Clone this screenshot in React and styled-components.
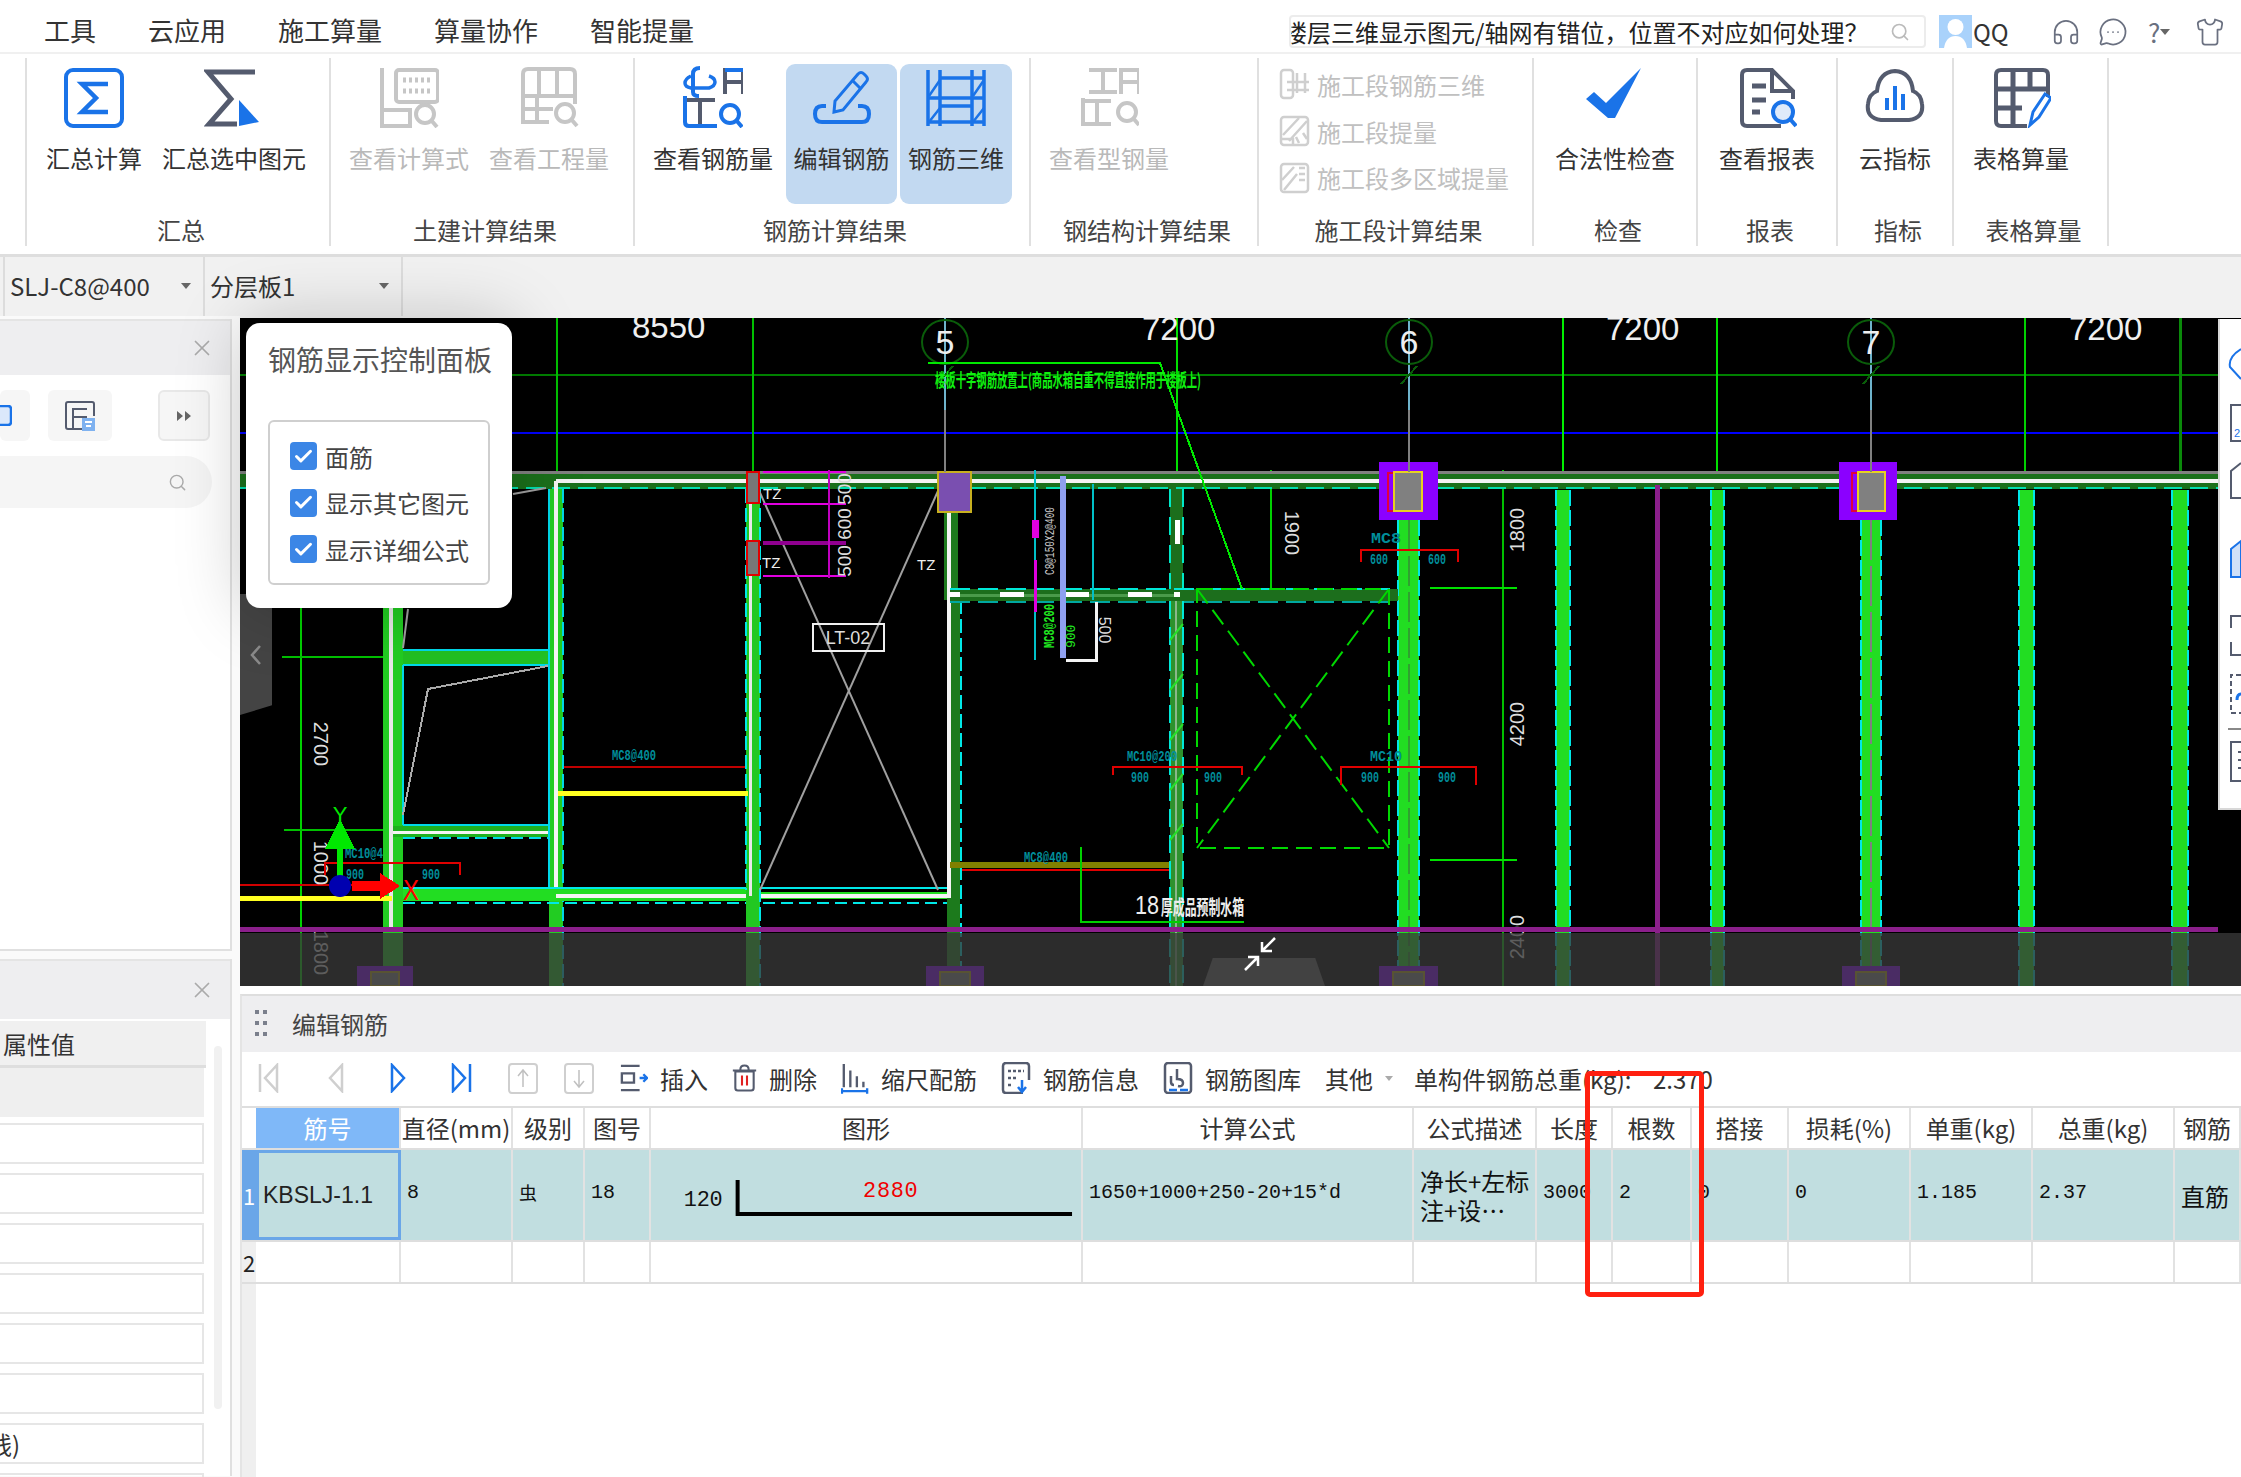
import React from "react";
import styled, { createGlobalStyle } from "styled-components";
import { Check, Headphones, MessageCircleMore, Search, Shirt, X } from "lucide-react";

const BLUE = "#1a73e8";
const DARK = "#545b6e";
const OFF = "#c6c6c6";
const CJK = `"Noto Sans CJK SC", "Liberation Sans", sans-serif`;
const MONO = `"Liberation Mono", "Noto Sans CJK SC", monospace`;

const GlobalStyle = createGlobalStyle`
  html, body { margin: 0; padding: 0; background: #fff; }
  body { font-family: ${CJK}; color: #333; }
  * { box-sizing: border-box; }
`;

const Page = styled.div`
  position: relative;
  width: 2241px;
  height: 1477px;
  overflow: hidden;
  background: #fff;
`;

/* top menu */
const MenuBar = styled.div`
  display: flex;
  align-items: center;
  height: 54px;
  padding: 8px 0 0 44px;
  gap: 52px;
  border-bottom: 2px solid #f0f0f0;
  font-size: 26px;
  color: #333;
`;
const MenuItem = styled.span`
  line-height: 36px;
`;
const MenuRight = styled.div`
  display: flex;
  align-items: center;
  margin-left: auto;
  margin-top: 3px;
  height: 36px;
`;
const SearchBox = styled.div`
  display: flex;
  align-items: center;
  width: 637px;
  height: 33px;
  margin-right: 13px;
  border: 2px solid #ececec;
  border-radius: 4px;
  overflow: hidden;
  font-size: 24px;
  white-space: nowrap;
  color: #222;
`;
const SearchText = styled.span`
  margin-left: -8px;
  flex: 1;
`;
const SearchGlyph = styled.span`
  display: flex;
  margin-right: 14px;
  color: #bbb;
`;
const QQ = styled.span`
  font-size: 24px;
  margin-left: 1px;
  color: #333;
  width: 78px;
`;
const TopIcon = styled.span`
  display: flex;
  width: ${(p) => p.$w}px;
  color: #6a7080;
  font-size: 26px;
  align-items: center;
`;

/* ribbon */
const Ribbon = styled.div`
  display: flex;
  height: 203px;
  padding: 4px 0 0 25px;
  border-bottom: 3px solid #dedede;
`;
const Group = styled.div`
  display: flex;
  flex-direction: column;
  width: ${(p) => p.$w}px;
  height: 188px;
  padding-top: 6px;
  border-left: 2px solid #e0e0e0;
  ${(p) => p.$last && "border-right: 2px solid #e0e0e0;"}
`;
const ButtonRow = styled.div`
  display: flex;
  height: 140px;
  justify-content: ${(p) => (p.$pad === undefined ? "center" : "flex-start")};
  margin-left: ${(p) => p.$pad || 0}px;
  gap: ${(p) => p.$gap || 0}px;
`;
const RibbonButton = styled.div`
  display: flex;
  flex-direction: column;
  align-items: center;
  flex-shrink: 0;
  width: ${(p) => p.$w || 140}px;
  height: 140px;
  padding-top: 2px;
  border-radius: 9px;
  background: ${(p) => (p.$active ? "#c2d9f1" : "transparent")};
  svg {
    display: block;
  }
`;
const ButtonLabel = styled.span`
  margin-top: 14px;
  font-size: 24px;
  line-height: 32px;
  white-space: nowrap;
  color: ${(p) => (p.$off ? "#b9b9b9" : "#333")};
`;
const GroupLabel = styled.div`
  margin-top: 10px;
  padding-left: 6px;
  text-align: center;
  font-size: 24px;
  line-height: 32px;
  white-space: nowrap;
  color: #444;
`;
const SmallList = styled.div`
  display: flex;
  flex-direction: column;
  height: 140px;
  margin-top: -3px;
  margin-bottom: 3px;
  padding-left: 20px;
`;
const SmallItem = styled.div`
  display: flex;
  align-items: center;
  gap: 7px;
  height: 48px;
  font-size: 24px;
  white-space: nowrap;
  color: #c0c0c0;
`;

/* combos under the ribbon */
const SubBar = styled.div`
  display: flex;
  height: 59px;
  padding-left: 3px;
  background: #f1f1f1;
`;
const Combo = styled.div`
  display: flex;
  align-items: center;
  justify-content: space-between;
  width: 200px;
  padding: 0 12px 2px 5px;
  border-left: 2px solid #dcdcdc;
  ${(p) => p.$end && "border-right: 2px solid #dcdcdc;"}
  font-size: 24px;
  color: #333;
`;
const Caret = styled.span`
  width: 0;
  height: 0;
  border-left: 5px solid transparent;
  border-right: 5px solid transparent;
  border-top: 6px solid #666;
`;

const Workspace = styled.div`
  display: flex;
  height: 1161px;
  background: #fafafa;
`;

/* left column */
const LeftColumn = styled.div`
  display: flex;
  flex-direction: column;
  width: 232px;
  flex-shrink: 0;
  padding-top: 3px;
`;
const SidePanel = styled.div`
  position: relative;
  flex-shrink: 0;
  height: ${(p) => p.$h}px;
  background: #fff;
  border-right: 2px solid #e0e0e0;
  ${(p) => p.$bottom && "border-bottom: 2px solid #e0e0e0;"}
  margin-bottom: ${(p) => (p.$bottom ? 8 : 0)}px;
`;
const SideHeader = styled.div`
  display: flex;
  align-items: center;
  justify-content: flex-end;
  height: ${(p) => p.$h}px;
  padding-right: 15px;
  background: #eeeef0;
  border-top: 2px solid #e4e4e4;
  color: #aaa;
`;
const SideTools = styled.div`
  display: flex;
  height: 51px;
  margin-top: 15px;
`;
const SideTool = styled.div`
  display: flex;
  align-items: center;
  justify-content: ${(p) => p.$justify || "center"};
  width: ${(p) => p.$w}px;
  margin-left: ${(p) => p.$ml || 0}px;
  background: #f6f6f6;
  border-radius: 6px;
  ${(p) => p.$line && "border: 2px solid #e8e8e8;"}
`;
const SidePill = styled.div`
  display: flex;
  align-items: center;
  justify-content: flex-end;
  width: 212px;
  height: 52px;
  margin-top: 15px;
  padding-right: 25px;
  border-radius: 0 26px 26px 0;
  background: #f5f5f5;
  color: #aaa;
`;
const PropHead = styled.div`
  display: flex;
  align-items: center;
  width: 206px;
  height: 47px;
  padding-left: 3px;
  margin-top: 2px;
  background: #f0f0f0;
  border-bottom: 3px solid #dedede;
  font-size: 24px;
  color: #333;
`;
const PropBlank = styled.div`
  width: 204px;
  height: 49px;
  background: #efefef;
`;
const PropRow = styled.div`
  display: flex;
  align-items: center;
  width: 204px;
  height: 41px;
  margin-top: ${(p) => p.$mt}px;
  border: 2px solid #e6e6e6;
  border-left: 0;
  overflow: hidden;
  font-size: 24px;
  white-space: nowrap;
  color: #333;
`;
const ClippedText = styled.span`
  margin-left: -12px;
`;
const ScrollThumb = styled.div`
  position: absolute;
  left: 214px;
  top: 87px;
  width: 8px;
  height: 363px;
  border-radius: 4px;
  background: #f1f1f1;
`;

/* main column */
const Main = styled.div`
  display: flex;
  flex-direction: column;
  flex: 1;
  margin-left: 8px;
  padding-top: 2px;
  background: linear-gradient(#f1f1f1 2px, #fff 2px);
`;
const Canvas = styled.div`
  position: relative;
  height: 668px;
  background: #000;
  svg {
    display: block;
  }
`;
const DarkBar = styled.div`
  position: absolute;
  left: 0;
  right: 0;
  bottom: 0;
  height: 53px;
  background: rgba(56, 56, 56, 0.78);
`;
const FoldTab = styled.div`
  position: absolute;
  left: 963px;
  bottom: 0;
  width: 122px;
  height: 28px;
  background: #424242;
  clip-path: polygon(8% 0, 92% 0, 100% 100%, 0 100%);
`;
const FoldIcon = styled.svg`
  position: absolute;
  left: 1002px;
  top: 618px;
`;
const SideTab = styled.div`
  position: absolute;
  left: 0;
  top: 276px;
  display: flex;
  align-items: center;
  justify-content: center;
  width: 32px;
  height: 121px;
  background: #444;
  clip-path: polygon(0 0, 100% 0, 100% 92%, 0 100%);
  color: #888;
`;
const RightRail = styled.div`
  position: absolute;
  right: 0;
  top: 1px;
  width: 23px;
  height: 491px;
  background: #fff;
  border-left: 2px solid #d8d8d8;
  border-bottom: 2px solid #d8d8d8;
  overflow: hidden;
`;

const Popup = styled.div`
  position: absolute;
  left: 6px;
  top: 5px;
  width: 266px;
  height: 285px;
  padding: 20px 22px 0 22px;
  border-radius: 14px;
  background: #fff;
  box-shadow: 0 0 70px rgba(0, 0, 0, 0.22);
`;
const PopupTitle = styled.div`
  font-size: 28px;
  line-height: 32px;
  white-space: nowrap;
  color: #555;
`;
const PopupBox = styled.div`
  display: flex;
  flex-direction: column;
  gap: 18.5px;
  width: 222px;
  height: 165px;
  margin-top: 45px;
  padding: 20px 0 0 20px;
  border: 2px solid #cfcfcf;
  border-radius: 6px;
`;
const CheckRow = styled.div`
  display: flex;
  align-items: center;
  gap: 8px;
  height: 28px;
  font-size: 24px;
  white-space: nowrap;
  color: #444;
`;
const CheckBox = styled.span`
  display: flex;
  align-items: center;
  justify-content: center;
  width: 27px;
  height: 28px;
  border-radius: 4px;
  background: #3b86e6;
  color: #fff;
`;

/* edit panel */
const EditPanel = styled.div`
  display: flex;
  flex-direction: column;
  flex: 1;
  margin-top: 8px;
  border-top: 2px solid #dedede;
  border-left: 2px solid #e4e4e4;
  background: #fff;
`;
const EditHeader = styled.div`
  display: flex;
  align-items: center;
  gap: 25px;
  height: 56px;
  padding: 0 0 2px 13px;
  background: #eeeef0;
  font-size: 24px;
  color: #444;
`;
const DragDots = styled.div`
  display: grid;
  grid-template-columns: 4px 4px;
  grid-auto-rows: 4px;
  gap: 7px 4px;
  span {
    background: #7a7f8c;
  }
`;
const Toolbar = styled.div`
  display: flex;
  align-items: center;
  height: 56px;
  padding: 0 0 2px 16px;
  border-bottom: 2px solid #dedede;
  font-size: 24px;
  white-space: nowrap;
  color: #333;
`;
const NavSlot = styled.div`
  display: flex;
  width: ${(p) => p.$w}px;
`;
const ToolItem = styled.div`
  display: flex;
  align-items: center;
  gap: 12px;
  margin-right: 24px;
`;
const TotalText = styled.span`
  margin-left: 21px;
  white-space: pre;
`;
const SmallCaret = styled(Caret)`
  margin-left: -12px;
  border-top-color: #aaa;
  border-left-width: 4px;
  border-right-width: 4px;
  border-top-width: 5px;
`;
const GridRow = styled.div`
  display: grid;
  grid-template-columns: 14px 145px 112px 72px 66px 432px 331px 123px 76px 79px 97px 122px 122px 142px 1fr;
  height: ${(p) => p.$h}px;
  flex-shrink: 0;
  background: ${(p) => p.$bg || "#fff"};
  border-bottom: 2px solid #dedede;
`;
const HeadCell = styled.div`
  display: flex;
  align-items: center;
  justify-content: center;
  padding-bottom: 2px;
  overflow: hidden;
  white-space: nowrap;
  border-right: 2px solid #e2e2e2;
  font-size: 24px;
  color: ${(p) => (p.$on ? "#fff" : "#333")};
  background: ${(p) => (p.$on ? "#7fb8f8" : "transparent")};
`;
const BodyCell = styled.div`
  display: flex;
  align-items: center;
  padding: 0 0 6px 6px;
  overflow: hidden;
  white-space: nowrap;
  border-right: 2px solid #e2e2e2;
  font-family: ${MONO};
  font-size: 20px;
  color: #111;
`;
const NameCell = styled.div`
  display: flex;
  align-items: center;
  padding-left: 4px;
  border: 3px solid #6aa6e8;
  font-family: "Liberation Sans", sans-serif;
  font-size: 23px;
  color: #222;
`;
const TextCell = styled(BodyCell)`
  font-family: ${CJK};
  font-size: ${(p) => p.$size || 24}px;
  line-height: 29px;
  padding-bottom: ${(p) => p.$drop || 0}px;
  color: #111;
`;
const RowHead = styled.div`
  display: flex;
  align-items: center;
  justify-content: center;
  font-size: 22px;
  background: ${(p) => (p.$on ? "#6aa6e8" : "#efefef")};
  color: ${(p) => (p.$on ? "#fff" : "#222")};
`;
const FillerRow = styled.div`
  flex: 1;
  width: 14px;
  background: #efefef;
`;
const RedMark = styled.div`
  position: absolute;
  left: 1585px;
  top: 1071px;
  width: 119px;
  height: 226px;
  border: 5px solid #ff2010;
  border-radius: 5px;
`;

/* ribbon icons */
const Ico = ({ children, w = 60, h = 62, vb = "0 0 60 62" }) => (
  <svg width={w} height={h} viewBox={vb} fill="none" strokeWidth="4">
    {children}
  </svg>
);

const SumIcon = () => (
  <Ico>
    <rect x="2" y="4" width="56" height="56" rx="7" stroke={BLUE} />
    <path d="M44 18H18l14 14-14 14h26" stroke={BLUE} strokeWidth="4.5" />
  </Ico>
);
const SumPickIcon = () => (
  <Ico>
    <path d="M51 6H4l23 27L5 58h28" stroke={DARK} strokeWidth="5" />
    <path d="M35 34l20 22-20 4z" fill={BLUE} />
  </Ico>
);
const FormulaIcon = () => (
  <Ico>
    <path d="M3 2v58h28V44H3" stroke={OFF} />
    <rect x="17" y="4" width="42" height="32" rx="3" stroke={OFF} />
    <path d="M24 14h28M24 25h28" stroke={OFF} strokeDasharray="3 3" strokeWidth="5" />
    <circle cx="46" cy="48" r="9" stroke={OFF} />
    <path d="M52 54l6 7" stroke={OFF} />
  </Ico>
);
const QtyIcon = () => (
  <Ico>
    <path d="M4 30V8q0-5 5-5h42q5 0 5 5v30M4 30h52M20 3v27M38 3v27M4 30v26h26M4 43h30M18 30v26" stroke={OFF} />
    <circle cx="46" cy="47" r="9" stroke={OFF} />
    <path d="M52 53l6 7" stroke={OFF} />
  </Ico>
);
const RebarQtyIcon = () => (
  <Ico>
    <path d="M17 2q-7 0-7 6v18q0 4 6 4" stroke={BLUE} />
    <path d="M8 10q-6 3-6 7t6 5h18q6-2 6-6t-6-6" stroke={BLUE} strokeWidth="3.5" />
    <path d="M42 28V4h18v24M42 16h18" stroke={DARK} />
    <path d="M42 4h18" stroke={BLUE} />
    <path d="M2 30v26q0 4 4 4h28" stroke={BLUE} />
    <path d="M4 34h28M17 34v24" stroke={DARK} />
    <circle cx="47" cy="48" r="9" stroke={BLUE} />
    <path d="M53 54l6 7" stroke={BLUE} />
  </Ico>
);
const EditRebarIcon = () => (
  <Ico>
    <path d="M14 40h-4q-7 0-7 8t7 8h40q7 0 7-8t-7-8h-4" stroke={BLUE} />
    <path d="M22 46l1-11 23-27q3-3 6 0l2 2q3 3 0 6L31 44z" stroke={BLUE} strokeWidth="3" />
    <path d="M40 14l8 8" stroke={BLUE} strokeWidth="3" />
  </Ico>
);
const Rebar3dIcon = () => (
  <Ico>
    <path d="M2 4v56M14 4v56M46 4v56M58 4v56M14 12h44M2 32h56M14 40h32M2 56h56" stroke={BLUE} strokeWidth="3.5" />
    <path d="M14 14L3 30M58 14L47 30M14 42L3 56M58 42L47 56" stroke={BLUE} strokeWidth="2.5" />
  </Ico>
);
const SteelIcon = () => (
  <Ico>
    <path d="M10 4h28M24 4v22M10 26h28" stroke={OFF} />
    <path d="M42 28V4h18v24M42 16h18" stroke={OFF} />
    <path d="M4 32v26h28M6 35h26M18 35v22" stroke={OFF} />
    <circle cx="48" cy="46" r="9" stroke={OFF} />
    <path d="M54 52l6 7" stroke={OFF} />
  </Ico>
);
const CheckMark = () => (
  <Ico>
    <path d="M1 33l8-7 12 11L56 2 30 52h-7z" fill={BLUE} />
  </Ico>
);
const ReportIcon = () => (
  <Ico>
    <path d="M44 60H10q-5 0-5-5V9q0-5 5-5h25l21 21v8" stroke={DARK} />
    <path d="M35 4v21h21" stroke={DARK} />
    <path d="M15 20h14M15 34h14M15 46h8" stroke={DARK} strokeWidth="5" />
    <circle cx="46" cy="46" r="10" stroke={BLUE} fill="#dfeafa" />
    <path d="M53 53l6 7" stroke={BLUE} />
  </Ico>
);
const CloudIcon = () => (
  <Ico>
    <path d="M16 54Q1 52 3 38q1-10 9-13Q14 6 30 5q16 1 18 20 8 3 9 13 2 14-13 16z" stroke={DARK} />
    <path d="M22 44V32M30 44V20M38 44V28" stroke={BLUE} />
  </Ico>
);
const TableIcon = () => (
  <Ico>
    <path d="M36 60H10q-5 0-5-5V9q0-5 5-5h42q5 0 5 5v22" stroke={DARK} />
    <path d="M5 23h52M5 42h26M22 4v56M39 4v19" stroke={DARK} strokeWidth="5" />
    <path d="M39 59l3-13 12-18 6 4-12 19z" stroke={BLUE} strokeWidth="3" />
  </Ico>
);

const MiniIcon = ({ kind }) => (
  <svg width="31" height="32" viewBox="0 0 31 32" fill="none" stroke="#cfcfcf" strokeWidth="2.5">
    <rect x="2" y="2" width={kind === "a" ? 12 : 27} height="28" rx="3" />
    {kind === "a" && <path d="M8 14h22M18 5v20M26 5v20M8 22h22" />}
    {kind === "b" && <path d="M4 20L20 3M10 26L28 6M2 24h12v6M17 22l3 6M24 18l4 6" />}
    {kind === "c" && <path d="M3 18L15 5M5 28L18 12M20 6h6M20 12h6M20 18h6" />}
  </svg>
);

const ribbonGroups = [
  { w: 304, title: "汇总", pad: -3, items: [{ label: "汇总计算", icon: <SumIcon /> }, { label: "汇总选中图元", icon: <SumPickIcon /> }] },
  { w: 304, title: "土建计算结果", pad: 8, items: [{ label: "查看计算式", icon: <FormulaIcon />, off: true }, { label: "查看工程量", icon: <QtyIcon />, off: true }] },
  {
    w: 396, title: "钢筋计算结果", pad: 8, gap: 3,
    items: [
      { label: "查看钢筋量", icon: <RebarQtyIcon /> },
      { label: "编辑钢筋", icon: <EditRebarIcon />, active: true, bw: 111 },
      { label: "钢筋三维", icon: <Rebar3dIcon />, active: true, bw: 112 },
    ],
  },
  { w: 228, title: "钢结构计算结果", pad: 8, items: [{ label: "查看型钢量", icon: <SteelIcon />, off: true }] },
  { w: 275, title: "施工段计算结果", small: [["a", "施工段钢筋三维"], ["b", "施工段提量"], ["c", "施工段多区域提量"]] },
  { w: 164, title: "检查", items: [{ label: "合法性检查", icon: <CheckMark /> }] },
  { w: 140, title: "报表", items: [{ label: "查看报表", icon: <ReportIcon /> }] },
  { w: 116, title: "指标", items: [{ label: "云指标", icon: <CloudIcon />, bw: 100 }] },
  { w: 157, title: "表格算量", last: true, pad: -3, items: [{ label: "表格算量", icon: <TableIcon /> }] },
];

/* drawing data, in page coordinates */
const thinLines = [
  [240, 375, 2218, 375, "#008000", 2],
  [240, 433, 2218, 433, "#0000ff", 2],
  [301, 600, 301, 986, "#00d000", 2],
  [557, 318, 557, 472, "#00c000", 2],
  [753, 318, 753, 472, "#00c000", 2],
  [1177, 318, 1177, 472, "#00e000", 2],
  [1563, 318, 1563, 472, "#00f000", 2],
  [1717, 318, 1717, 472, "#00e000", 2],
  [2025, 318, 2025, 472, "#00d000", 2],
  [2180, 318, 2180, 472, "#0a8a0a", 3],
  [1503, 470, 1503, 986, "#00c000", 1.5],
  [1271, 470, 1271, 600, "#00d000", 2],
  [282, 657, 383, 657, "#00c000", 2],
  [284, 830, 383, 830, "#00c000", 2],
  [1430, 588, 1517, 588, "#00e000", 2],
  [1430, 860, 1517, 860, "#00e000", 2],
  [1255, 594, 1298, 594, "#00e000", 2],
  [563, 767, 746, 767, "#c00000", 2],
  [240, 885, 390, 885, "#d00000", 2],
  [950, 870, 1175, 870, "#e00000", 2],
];
const greyLines = [
  [938, 491, 760, 890],
  [757, 486, 938, 890],
  [546, 488, 513, 494],
  [403, 648, 408, 609],
];
const vertWalls = [
  [1398, 1419, 520],
  [1556, 1570, 490],
  [1711, 1724, 490],
  [1861, 1881, 520],
  [2019, 2034, 490],
  [2172, 2188, 490],
];
const redBrackets = [
  [1113, 1242, 767, 775],
  [1341, 1476, 767, 785],
  [1361, 1458, 550, 562],
  [325, 460, 863, 875],
];
const tealLabels = [
  [612, 760, "MC8@400", 44],
  [1127, 761, "MC10@200", 50],
  [1370, 761, "MC10", 32],
  [1371, 543, "MC8", 30],
  [1024, 862, "MC8@400", 44],
  [345, 858, "MC10@4", 38],
  [1131, 782, "900", 18],
  [1204, 782, "900", 18],
  [1361, 782, "900", 18],
  [1438, 782, "900", 18],
  [1370, 564, "600", 18],
  [1428, 564, "600", 18],
  [346, 879, "900", 18],
  [422, 879, "900", 18],
];
const dimTexts = [
  [632, 338, "8550", 33],
  [1142, 340, "7200", 33],
  [1606, 340, "7200", 33],
  [2069, 340, "7200", 33],
];
const turnedTexts = [
  [319, 744, "2700", 90, 20, "#ddd"],
  [319, 863, "1000", 90, 20, "#ddd"],
  [319, 953, "1800", 90, 20, "#ddd"],
  [846, 489, "500", -90, 19, "#ddd"],
  [846, 524, "600", -90, 19, "#ddd"],
  [846, 561, "500", -90, 19, "#ddd"],
  [1290, 533, "1900", 90, 20, "#ddd"],
  [1519, 530, "1800", -90, 20, "#ddd"],
  [1519, 724, "4200", -90, 20, "#ddd"],
  [1519, 937, "2400", -90, 20, "#ddd"],
  [1103, 630, "500", 90, 16, "#ddd"],
];
const axisMarks = [
  [945, "5"],
  [1409, "6"],
  [1871, "7"],
];
const bigColumns = [
  [1379, 59, 1394, 28],
  [1839, 58, 1858, 27],
];

const Ln = ({ d }) => <line x1={d[0]} y1={d[1]} x2={d[2]} y2={d[3]} stroke={d[4]} strokeWidth={d[5]} strokeDasharray={d[6]} />;

function CadDrawing() {
  return (
    <svg width="2001" height="668" viewBox="240 318 2001 668" shapeRendering="crispEdges" fontFamily={`"Liberation Sans", sans-serif`}>
      {thinLines.map((d, i) => <Ln key={i} d={d} />)}

      {/* top beam */}
      <rect x="240" y="472" width="1978" height="17" fill="#1b701b" />
      <line x1="240" y1="472" x2="2218" y2="472" stroke="#808080" strokeWidth="3" />
      <line x1="240" y1="488" x2="2218" y2="488" stroke="#00e0b0" strokeWidth="2" strokeDasharray="18 8" />
      <line x1="556" y1="481" x2="2218" y2="481" stroke="#f4f4f4" strokeWidth="4" />

      {/* walls */}
      {vertWalls.map(([a, b, top]) => (
        <g key={a}>
          <rect x={a} y={top} width={b - a} height={986 - top} fill="#22dd22" />
          <line x1={a} y1={top} x2={a} y2="986" stroke="#00e8e8" strokeWidth="2" strokeDasharray="16 4" />
          <line x1={b} y1={top} x2={b} y2="986" stroke="#00e8e8" strokeWidth="2" strokeDasharray="16 4" />
        </g>
      ))}
      <line x1="1409" y1="520" x2="1409" y2="986" stroke="#30a030" strokeWidth="2" strokeDasharray="30 6" />
      <line x1="1871" y1="520" x2="1871" y2="986" stroke="#808080" strokeWidth="2" strokeDasharray="40 6" />
      <line x1="1657" y1="485" x2="1657" y2="986" stroke="#8b1f8b" strokeWidth="5" />

      {/* rooms on the left */}
      <rect x="383" y="600" width="20" height="386" fill="#22cc22" />
      <line x1="391" y1="600" x2="391" y2="930" stroke="#e8e8e8" strokeWidth="4" />
      <rect x="403" y="650" width="146" height="15" fill="#22c022" />
      <line x1="403" y1="650" x2="549" y2="650" stroke="#00d8e8" strokeWidth="2" />
      <line x1="403" y1="665" x2="549" y2="665" stroke="#00d8e8" strokeWidth="2" />
      <line x1="403" y1="825" x2="549" y2="825" stroke="#00d8e8" strokeWidth="2" />
      <rect x="393" y="826" width="163" height="11" fill="#1fb01f" />
      <line x1="393" y1="832" x2="556" y2="832" stroke="#f4f4f4" strokeWidth="3" />
      <line x1="403" y1="838" x2="549" y2="838" stroke="#00d8e8" strokeWidth="2" strokeDasharray="12 6" />
      <line x1="403" y1="665" x2="403" y2="825" stroke="#00d8e8" strokeWidth="2" />
      <rect x="549" y="489" width="14" height="497" fill="#22cc22" />
      <line x1="549" y1="489" x2="549" y2="895" stroke="#00d8e8" strokeWidth="2" />
      <line x1="563" y1="489" x2="563" y2="986" stroke="#00d8e8" strokeWidth="2" strokeDasharray="14 5" />
      <line x1="556" y1="481" x2="556" y2="897" stroke="#f4f4f4" strokeWidth="4" />
      <rect x="403" y="889" width="345" height="12" fill="#22dd22" />
      <line x1="403" y1="888" x2="948" y2="888" stroke="#00e8e8" strokeWidth="2" />
      <line x1="403" y1="903" x2="948" y2="903" stroke="#00e8e8" strokeWidth="2" strokeDasharray="12 6" />
      <rect x="748" y="892" width="200" height="7" fill="#22dd22" />
      <line x1="556" y1="896" x2="948" y2="896" stroke="#f4f4f4" strokeWidth="4" />
      <rect x="746" y="489" width="14" height="497" fill="#22c822" />
      <line x1="760" y1="489" x2="760" y2="986" stroke="#00e8e8" strokeWidth="2" strokeDasharray="14 5" />
      <line x1="746" y1="489" x2="746" y2="890" stroke="#00e8e8" strokeWidth="2" strokeDasharray="14 5" />
      <line x1="750" y1="481" x2="750" y2="896" stroke="#e8e8e8" strokeWidth="3" />
      <line x1="558" y1="793" x2="748" y2="793" stroke="#ffff20" strokeWidth="5" />
      <line x1="240" y1="898" x2="392" y2="898" stroke="#ffff20" strokeWidth="5" />
      <polyline points="548,666 428,689 403,815" fill="none" stroke="#aaa" strokeWidth="2" />
      {greyLines.map((d, i) => <line key={i} x1={d[0]} y1={d[1]} x2={d[2]} y2={d[3]} stroke="#a0a0a0" strokeWidth="2" shapeRendering="auto" />)}

      {/* stair labels */}
      {[472, 504, 576].map((y) => <line key={y} x1="763" y1={y} x2="846" y2={y} stroke="#e000e0" strokeWidth="2" />)}
      <line x1="763" y1="543" x2="846" y2="543" stroke="#900090" strokeWidth="4" />
      <line x1="829" y1="470" x2="829" y2="578" stroke="#c000c0" strokeWidth="2" />
      <rect x="747" y="472" width="12" height="31" fill="#777" stroke="#e00000" strokeWidth="2" />
      <rect x="747" y="541" width="12" height="34" fill="#777" stroke="#e00000" strokeWidth="2" />
      <text x="763" y="499" fill="#eee" fontSize="15">TZ</text>
      <text x="762" y="568" fill="#eee" fontSize="15">TZ</text>
      <text x="917" y="570" fill="#eee" fontSize="15">TZ</text>
      <rect x="813" y="624" width="71" height="27" fill="none" stroke="#f0f0f0" strokeWidth="2" />
      <text x="848" y="644" textAnchor="middle" fill="#ddd" fontSize="18">LT-02</text>

      {/* lower middle room */}
      <rect x="947" y="600" width="13" height="386" fill="#1c7a1c" />
      <line x1="961" y1="600" x2="961" y2="986" stroke="#00e8e8" strokeWidth="2" strokeDasharray="14 5" />
      <rect x="944" y="489" width="14" height="111" fill="#1c7a1c" />
      <line x1="949" y1="481" x2="949" y2="898" stroke="#f4f4f4" strokeWidth="4" />
      <line x1="950" y1="865" x2="1175" y2="865" stroke="#808000" strokeWidth="6" />

      {/* second beam and slab */}
      <rect x="1170" y="489" width="13" height="111" fill="#1c6e1c" />
      <line x1="1170" y1="489" x2="1170" y2="600" stroke="#00e8c8" strokeWidth="2" strokeDasharray="18 10" />
      <line x1="1183" y1="489" x2="1183" y2="600" stroke="#00e8c8" strokeWidth="2" strokeDasharray="18 10" />
      <rect x="1175" y="520" width="5" height="24" fill="#fff" />
      <rect x="950" y="589" width="448" height="12" fill="#1c6e1c" />
      <line x1="950" y1="589" x2="1398" y2="589" stroke="#00e8d8" strokeWidth="2" strokeDasharray="20 8" />
      <line x1="950" y1="602" x2="1398" y2="602" stroke="#00a8a0" strokeWidth="2" strokeDasharray="20 8" />
      <line x1="950" y1="595" x2="1175" y2="595" stroke="#4a9a4a" strokeWidth="3" />
      {[[949, 11], [1000, 24], [1066, 23], [1128, 24], [1174, 6]].map(([x, w]) => <rect key={x} x={x} y="592" width={w} height="5" fill="#fff" />)}
      <rect x="1170" y="601" width="13" height="385" fill="#2d922d" />
      <line x1="1170" y1="601" x2="1170" y2="986" stroke="#00e8d8" strokeWidth="2" strokeDasharray="18 8" />
      <line x1="1183" y1="601" x2="1183" y2="986" stroke="#00e8d8" strokeWidth="2" strokeDasharray="18 8" />
      <line x1="1176" y1="601" x2="1176" y2="986" stroke="#8ab88a" strokeWidth="2" />
      <path d="M1170 640l13-16M1170 690l13-16M1170 740l13-16M1170 790l13-16M1170 840l13-16" stroke="#28e028" strokeWidth="2" shapeRendering="auto" />
      <rect x="1197" y="589" width="192" height="259" fill="none" stroke="#00d800" strokeWidth="2" strokeDasharray="16 8" />
      <path d="M1197 589L1389 848M1389 589L1197 848" stroke="#00d800" strokeWidth="2" strokeDasharray="18 8" shapeRendering="auto" />
      <path d="M1081 847V922H1244" fill="none" stroke="#00d000" strokeWidth="2" />
      <text x="1135" y="914" fill="#eee" fontSize="26" textLength="24" lengthAdjust="spacingAndGlyphs">18</text>
      <text x="1161" y="915" fill="#eee" fontSize="20" fontWeight="700" textLength="83" lengthAdjust="spacingAndGlyphs" fontFamily={CJK}>厚成品预制水箱</text>

      {/* rebar detail by the top beam */}
      <line x1="1035" y1="470" x2="1035" y2="660" stroke="#00c0c8" strokeWidth="2" />
      <line x1="1035" y1="560" x2="1035" y2="612" stroke="#e000e0" strokeWidth="3" />
      <rect x="1032" y="520" width="7" height="18" fill="#e000e0" />
      <line x1="1063" y1="476" x2="1063" y2="658" stroke="#8fa0f0" strokeWidth="6" />
      <line x1="1093" y1="484" x2="1093" y2="600" stroke="#00c0c8" strokeWidth="2" />
      <path d="M1096 602V660H1066" fill="none" stroke="#f4f4f4" strokeWidth="3" />
      <text transform="translate(1054 575) rotate(-90)" fill="#ccc" fontSize="13" fontFamily={MONO} textLength="68" lengthAdjust="spacingAndGlyphs">C8@150X2@400</text>
      <text transform="translate(1054 648) rotate(-90)" fill="#20e820" fontSize="14" fontWeight="700" fontFamily={MONO} textLength="44" lengthAdjust="spacingAndGlyphs">MC8@200</text>
      <text transform="translate(1075 648) rotate(-90)" fill="#20e820" fontSize="13" fontFamily={MONO}>900</text>

      {/* columns */}
      <rect x="938" y="472" width="33" height="40" fill="#7a4fb0" stroke="#c8b020" strokeWidth="2" />
      {bigColumns.map(([x, w, ix, iw]) => (
        <g key={x}>
          <rect x={x} y="462" width={w} height="58" fill="#8b00ff" />
          <rect x={ix - 6} y="473" width={iw + 6} height="38" fill="none" stroke="#e00040" strokeWidth="2" />
          <rect x={ix} y="472" width={iw} height="39" fill="#808080" stroke="#e8d020" strokeWidth="2" />
        </g>
      ))}

      {/* grid axes and balloons */}
      {axisMarks.map(([x, n]) => (
        <g key={n}>
          <line x1={x} y1="318" x2={x} y2="410" stroke="#6fb4cc" strokeWidth="2" />
          <line x1={x} y1="410" x2={x} y2="472" stroke="#808080" strokeWidth="2" />
          <ellipse cx={x} cy="342" rx="23" ry="22" fill="none" stroke="#0a5c0a" strokeWidth="2" shapeRendering="auto" />
          <path d={`M${x + 8} 366L${x - 8} 384`} stroke="#0a5c0a" strokeWidth="2" />
          <text x={x} y="354" textAnchor="middle" fill="#eee" fontSize="34">{n}</text>
        </g>
      ))}

      {/* leader and note */}
      <path d="M928 363H1160L1242 589" fill="none" stroke="#00e800" strokeWidth="2" />
      <text x="935" y="387" fill="#10f010" fontSize="18" fontWeight="700" fontFamily={CJK} textLength="266" lengthAdjust="spacingAndGlyphs">楼板十字钢筋放置上(商品水箱自重不得直接作用于楼板上)</text>

      {/* dims */}
      {dimTexts.map(([x, y, t, s]) => <text key={x} x={x} y={y} fill="#f0f0f0" fontSize={s}>{t}</text>)}
      {turnedTexts.map(([x, y, t, r, s, c]) => (
        <text key={`${x}-${y}`} transform={`translate(${x} ${y}) rotate(${r})`} textAnchor="middle" dominantBaseline="middle" fill={c} fontSize={s}>{t}</text>
      ))}
      {redBrackets.map(([a, b, y, down]) => (
        <path key={a} d={`M${a} ${down}V${y}H${b}V${down}`} fill="none" stroke="#e00000" strokeWidth="2" />
      ))}
      {tealLabels.map(([x, y, t, w]) => (
        <text key={`${x}-${y}`} x={x} y={y} fill="#008e9a" fontSize="14" fontWeight="700" fontFamily={MONO} textLength={w} lengthAdjust="spacingAndGlyphs">{t}</text>
      ))}
      <line x1="240" y1="929" x2="2218" y2="929" stroke="#8b1f8b" strokeWidth="5" />

      {/* xy gizmo */}
      <path d="M340 876V846M330 846L340 826L350 846Z" fill="#00e800" stroke="#00e800" strokeWidth="6" />
      <text x="340" y="822" textAnchor="middle" fill="#00e800" fontSize="22">Y</text>
      <path d="M352 881H380V873L400 886L380 899V891H352Z" fill="#ff0000" />
      <text x="403" y="900" fill="#ff0000" fontSize="30" textLength="16" lengthAdjust="spacingAndGlyphs">X</text>
      <circle cx="340" cy="886" r="11" fill="#0000b0" shapeRendering="auto" />

      {/* next storey, shows through the dark strip */}
      {[[357, 56], [926, 58], [1379, 59], [1842, 58]].map(([x, w]) => (
        <g key={x}>
          <rect x={x} y="966" width={w} height="20" fill="#8b00ff" />
          <rect x={x + 14} y="972" width={w - 28} height="14" fill="#888" stroke="#c8b020" strokeWidth="2" />
        </g>
      ))}
    </svg>
  );
}

function RailIcons() {
  return (
    <svg width="23" height="490" viewBox="2220 319 23 490" fill="none" strokeWidth="2">
      <path d="M2241 349q-13 8-11 18l11 12" stroke={BLUE} />
      <path d="M2241 405h-10v36h10" stroke={DARK} />
      <text x="2234" y="437" fill={BLUE} fontSize="11" fontFamily="Liberation Sans">2</text>
      <path d="M2241 463l-10 8v27h10" stroke={DARK} />
      <path d="M2241 541l-10 8v28h10z" stroke={BLUE} fill="#cfe0f8" />
      <path d="M2241 616h-10v12M2231 642v13h10" stroke={DARK} />
      <path d="M2241 675h-10v38h10" stroke={DARK} strokeDasharray="5 3" />
      <path d="M2241 694q-4 0-4 6" stroke={BLUE} strokeWidth="3" />
      <path d="M2228 729h13" stroke="#888" />
      <path d="M2241 742h-10v39h10" stroke={DARK} />
      <path d="M2238 752h3M2238 760h3M2238 768h3" stroke={DARK} />
    </svg>
  );
}

const Nav = ({ kind, on }) => {
  const c = on ? BLUE : "#cfcfcf";
  const flip = kind === "first" || kind === "prev";
  const bar = kind === "first" || kind === "last";
  return (
    <svg width="22" height="30" viewBox="0 0 22 30" fill="none" stroke={c} strokeWidth="2.5">
      <g transform={flip ? "translate(22 0) scale(-1 1)" : undefined}>
        <path d={bar ? "M3 2l12 13L3 28z" : "M5 2l12 13L5 28z"} />
        {bar && <path d="M20 1v28" />}
      </g>
    </svg>
  );
};
const MoveBox = ({ down }) => (
  <svg width="30" height="31" viewBox="0 0 30 31" fill="none" stroke="#cfcfcf" strokeWidth="2">
    <rect x="1" y="1" width="28" height="29" rx="3" />
    <path d={down ? "M15 7v17M10 18l5 6 5-6" : "M15 24V7M10 13l5-6 5 6"} stroke="#c0c0c0" strokeWidth="1.5" />
  </svg>
);
const ToolIcon = ({ kind }) => (
  <svg width={kind === "del" ? 25 : kind === "scale" ? 28 : kind === "insert" ? 28 : 30} height="32" viewBox="0 0 30 32" fill="none" stroke={DARK} strokeWidth="2.5">
    {kind === "insert" && (
      <>
        <path d="M1 3h20M1 29h20M2 11h13v10H2z" />
        <path d="M21 16h7M25 12l4 4-4 4" stroke={BLUE} />
      </>
    )}
    {kind === "del" && (
      <>
        <path d="M4 8h22v20q0 3-3 3H7q-3 0-3-3zM1 7h28M10 6q0-5 5-5t5 5" />
        <path d="M12 13v12M18 13v12" stroke="#e02020" />
      </>
    )}
    {kind === "scale" && (
      <>
        <path d="M3 1v25M10 8v18M17 14v12M24 20v6" />
        <path d="M1 30h27M1 27v6M28 27v6" stroke={BLUE} />
      </>
    )}
    {kind === "info" && (
      <>
        <path d="M22 31H5q-3 0-3-3V4q0-3 3-3h20q3 0 3 3v14" />
        <path d="M7 9h16M7 16h9M7 23h5" strokeDasharray="3 2" />
        <path d="M21 18v10M17 25l4 5 4-5" stroke={BLUE} />
      </>
    )}
    {kind === "lib" && (
      <>
        <rect x="2" y="1" width="26" height="30" rx="3" />
        <path d="M14 7v10q6 0 6 4t-5 3M8 14v6q0 3 3 3" />
        <path d="M6 28h8M17 28h8" stroke={BLUE} />
      </>
    )}
  </svg>
);

const cells = [
  { t: "8" },
  { t: "虫", size: 18, drop: 6 },
  { t: "18" },
  null,
  { t: "1650+1000+250-20+15*d" },
  null,
  { t: "3000" },
  { t: "2" },
  { t: "0" },
  { t: "0" },
  { t: "1.185" },
  { t: "2.37" },
  { t: "直筋", size: 24 },
];
const headers = ["直径(mm)", "级别", "图号", "图形", "计算公式", "公式描述", "长度", "根数", "搭接", "损耗(%)", "单重(kg)", "总重(kg)", "钢筋"];
const propGaps = [6, 9, 9, 9, 9, 9, 9];

export default function App() {
  return (
    <Page>
      <GlobalStyle />
      <MenuBar>
        {["工具", "云应用", "施工算量", "算量协作", "智能提量"].map((m) => <MenuItem key={m}>{m}</MenuItem>)}
        <MenuRight>
          <SearchBox>
            <SearchText>楼层三维显示图元/轴网有错位，位置不对应如何处理？</SearchText>
            <SearchGlyph><Search size={20} /></SearchGlyph>
          </SearchBox>
          <svg width="33" height="33" viewBox="0 0 33 33">
            <rect width="33" height="33" fill="#a9d2fb" />
            <circle cx="16.5" cy="12" r="8" fill="#fff" />
            <path d="M5 33q2-12 11.5-12T28 33z" fill="#fff" />
          </svg>
          <QQ>QQ</QQ>
          <TopIcon $w={47}><Headphones size={30} strokeWidth={1.4} /></TopIcon>
          <TopIcon $w={50}><MessageCircleMore size={30} strokeWidth={1.4} /></TopIcon>
          <TopIcon $w={47}>?<Caret /></TopIcon>
          <TopIcon $w={46}><Shirt size={30} strokeWidth={1.4} /></TopIcon>
        </MenuRight>
      </MenuBar>

      <Ribbon>
        {ribbonGroups.map((g) => (
          <Group key={g.title} $w={g.w} $last={g.last}>
            {g.small ? (
              <SmallList>
                {g.small.map(([k, t]) => (
                  <SmallItem key={t}><MiniIcon kind={k} />{t}</SmallItem>
                ))}
              </SmallList>
            ) : (
              <ButtonRow $pad={g.pad} $gap={g.gap}>
                {g.items.map((b) => (
                  <RibbonButton key={b.label} $w={b.bw} $active={b.active}>
                    {b.icon}
                    <ButtonLabel $off={b.off}>{b.label}</ButtonLabel>
                  </RibbonButton>
                ))}
              </ButtonRow>
            )}
            <GroupLabel>{g.title}</GroupLabel>
          </Group>
        ))}
      </Ribbon>

      <SubBar>
        <Combo>SLJ-C8@400<Caret /></Combo>
        <Combo $end>分层板1<Caret /></Combo>
      </SubBar>

      <Workspace>
        <LeftColumn>
          <SidePanel $h={632} $bottom>
            <SideHeader $h={56}><X size={26} strokeWidth={1.6} /></SideHeader>
            <SideTools>
              <SideTool $w={30} $justify="flex-start">
                <svg width="12" height="21" viewBox="0 0 12 21" fill="#dbe8fb" stroke={BLUE} strokeWidth="2.5"><path d="M0 1h8q3 0 3 3v13q0 3-3 3H0" /></svg>
              </SideTool>
              <SideTool $w={64} $ml={18}>
                <svg width="30" height="30" viewBox="0 0 30 30" fill="none" stroke={DARK} strokeWidth="2">
                  <path d="M18 28H3q-2 0-2-2V3q0-2 2-2h24q2 0 2 2v12M8 28V8h14M8 16h14" />
                  <rect x="17" y="17" width="13" height="13" fill="#7fb2f0" stroke="none" />
                  <path d="M20 21h7M21 25h5" stroke="#fff" />
                </svg>
              </SideTool>
              <SideTool $w={52} $ml={46} $line>
                <svg width="14" height="12" viewBox="0 0 14 12" fill="#666"><path d="M0 1l6 5-6 5zM8 1l6 5-6 5z" /></svg>
              </SideTool>
            </SideTools>
            <SidePill><Search size={19} strokeWidth={1.8} /></SidePill>
          </SidePanel>
          <SidePanel $h={517}>
            <SideHeader $h={60}><X size={26} strokeWidth={1.6} /></SideHeader>
            <PropHead>属性值</PropHead>
            <PropBlank />
            {propGaps.map((g, i) => (
              <PropRow key={i} $mt={g}>{i === 6 && <ClippedText>线)</ClippedText>}</PropRow>
            ))}
            <PropRow $mt={9} />
            <ScrollThumb />
          </SidePanel>
        </LeftColumn>

        <Main>
          <Canvas>
            <CadDrawing />
            <DarkBar />
            <FoldTab />
            <FoldIcon width="36" height="36" viewBox="0 0 36 36" fill="none" stroke="#fff" strokeWidth="2.5">
              <path d="M33 2L20 15M20 6v9h10M3 34l13-13M16 30v-9H6" />
            </FoldIcon>
            <SideTab>
              <svg width="12" height="20" viewBox="0 0 12 20" fill="none" stroke="#8a8a8a" strokeWidth="2.5"><path d="M10 1L2 10l8 9" /></svg>
            </SideTab>
            <RightRail><RailIcons /></RightRail>
            <Popup>
              <PopupTitle>钢筋显示控制面板</PopupTitle>
              <PopupBox>
                {["面筋", "显示其它图元", "显示详细公式"].map((t) => (
                  <CheckRow key={t}>
                    <CheckBox><Check size={21} strokeWidth={3.4} /></CheckBox>
                    {t}
                  </CheckRow>
                ))}
              </PopupBox>
            </Popup>
          </Canvas>

          <EditPanel>
            <EditHeader>
              <DragDots>{[0, 1, 2, 3, 4, 5].map((i) => <span key={i} />)}</DragDots>
              编辑钢筋
            </EditHeader>
            <Toolbar>
              <NavSlot $w={67}><Nav kind="first" /></NavSlot>
              <NavSlot $w={62}><Nav kind="prev" /></NavSlot>
              <NavSlot $w={63}><Nav kind="next" on /></NavSlot>
              <NavSlot $w={58}><Nav kind="last" on /></NavSlot>
              <NavSlot $w={56}><MoveBox /></NavSlot>
              <NavSlot $w={56}><MoveBox down /></NavSlot>
              <ToolItem><ToolIcon kind="insert" />插入</ToolItem>
              <ToolItem><ToolIcon kind="del" />删除</ToolItem>
              <ToolItem><ToolIcon kind="scale" />缩尺配筋</ToolItem>
              <ToolItem><ToolIcon kind="info" />钢筋信息</ToolItem>
              <ToolItem><ToolIcon kind="lib" />钢筋图库</ToolItem>
              <ToolItem>其他</ToolItem>
              <SmallCaret />
              <TotalText>单构件钢筋总重(kg):    2.370</TotalText>
            </Toolbar>

            <GridRow $h={42}>
              <span />
              <HeadCell $on>筋号</HeadCell>
              {headers.map((h) => <HeadCell key={h}>{h}</HeadCell>)}
            </GridRow>
            <GridRow $h={92} $bg="#c1dee0">
              <RowHead $on>1</RowHead>
              <NameCell>KBSLJ-1.1</NameCell>
              {cells.map((c, i) => {
                if (i === 3) {
                  return (
                    <BodyCell key={i}>
                      <svg width="426" height="84" viewBox="657 1150 426 84">
                        <text x="684" y="1206" fontSize="22" fontFamily={MONO} textLength="39" fill="#111">120</text>
                        <path d="M738 1180V1214H1074" fill="none" stroke="#000" strokeWidth="4" />
                        <text x="864" y="1197" fontSize="22" fontFamily={MONO} textLength="55" fill="#f00000">2880</text>
                      </svg>
                    </BodyCell>
                  );
                }
                if (i === 5) {
                  return <TextCell key={i}>净长+左标<br />注+设…</TextCell>;
                }
                return c.size ? <TextCell key={i} $size={c.size} $drop={c.drop}>{c.t}</TextCell> : <BodyCell key={i}>{c.t}</BodyCell>;
              })}
            </GridRow>
            <GridRow $h={42}>
              <RowHead>2</RowHead>
              {headers.concat("").map((h, i) => <HeadCell key={i} />)}
            </GridRow>
            <FillerRow />
          </EditPanel>
        </Main>
      </Workspace>
      <RedMark />
    </Page>
  );
}
